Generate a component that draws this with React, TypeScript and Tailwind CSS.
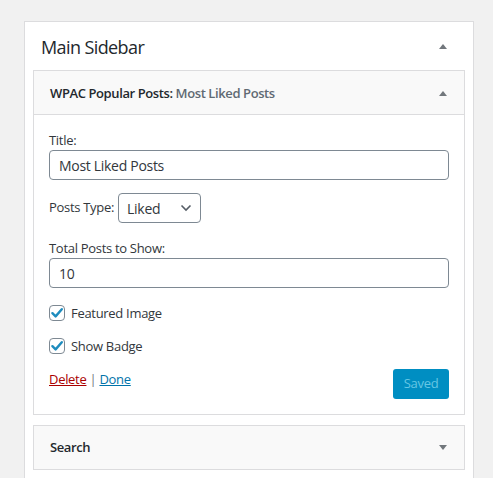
import React from "react";

const font = { fontFamily: '"Open Sans", "Noto Sans", sans-serif' };

function TriUp() {
  return (
    <svg width="10" height="6" viewBox="0 0 10 6" className="block">
      <polygon points="1,6 9,6 5,1" fill="#72777c" />
    </svg>
  );
}
function TriDown() {
  return (
    <svg width="10" height="6" viewBox="0 0 10 6" className="block">
      <polygon points="1,0 9,0 5,5" fill="#72777c" />
    </svg>
  );
}

function Check({ label }: { label: string }) {
  return (
    <div className="flex items-center h-[16px]">
      <span className="w-[16px] h-[16px] border border-[#7e8993] rounded-[4px] bg-white flex items-center justify-center shrink-0">
        <svg width="14" height="14" viewBox="0 0 14 14">
          <path d="M2.4 7.2 L5.6 10.4 L11.8 3.2" stroke="#1e8cbe" strokeWidth="2.4" fill="none" strokeLinecap="round" strokeLinejoin="round" />
        </svg>
      </span>
      <span className="ml-[6px] text-[13px] text-[#32373c] leading-[20px] tracking-[-0.3px]">{label}</span>
    </div>
  );
}

export default function App() {
  return (
    <div className="w-[493px] h-[478px] bg-[#f1f1f1] overflow-hidden pt-[21px] pl-[24px]" style={font}>
      <div className="w-[450px] h-[470px] bg-white border border-[#dcdcde] border-b-0">
        <div className="h-[48px] flex items-center justify-between pl-[16px] pr-[25px]">
          <h2 className="text-[18px] text-[#23282d] leading-[24px] mt-[2px] tracking-[-0.6px]">Main Sidebar</h2>
          <TriUp />
        </div>
        <div className="mx-[8px] border border-[#dcdcde]">
          <div className="h-[44px] bg-[#f9f9f9] border-b border-[#dcdcde] flex items-center justify-between pl-[16px] pr-[16px]">
            <div className="text-[13px] font-semibold text-[#23282d] leading-[20px] tracking-[-0.4px]">
              WPAC Popular Posts: <span className="text-[#606a73]">Most Liked Posts</span>
            </div>
            <TriUp />
          </div>
          <div className="px-[15px] pt-[16px] pb-[15px] text-[13px] text-[#32373c] tracking-[-0.3px]">
            <div className="h-[19px] leading-[19px]">Title:</div>
            <div className="h-[30px] border border-[#7e8993] rounded-[4px] px-[9px] flex items-center text-[14px] text-[#32373c]">
              Most Liked Posts
            </div>
            <div className="mt-[13px] h-[30px] flex items-center">
              <span>Posts Type:</span>
              <div className="ml-[4px] w-[83px] h-[30px] border border-[#7e8993] rounded-[4px] pl-[8px] pr-[8px] flex items-center justify-between text-[14px] text-[#32373c]">
                <span>Liked</span>
                <svg width="12" height="8" viewBox="0 0 12 8">
                  <path d="M1.5 1.5 L6 6 L10.5 1.5" stroke="#555d66" strokeWidth="1.6" fill="none" />
                </svg>
              </div>
            </div>
            <div className="mt-[15px] h-[20px] leading-[20px]">Total Posts to Show:</div>
            <div className="h-[30px] border border-[#7e8993] rounded-[4px] px-[9px] flex items-center text-[14px] text-[#32373c]">
              10
            </div>
            <div className="mt-[17px]">
              <Check label="Featured Image" />
            </div>
            <div className="mt-[17px]">
              <Check label="Show Badge" />
            </div>
            <div className="mt-[15px] flex items-start justify-between">
              <div className="leading-[20px]">
                <span className="text-[#a00] underline">Delete</span>
                <span className="text-[#72777c]"> | </span>
                <span className="text-[#0073aa] underline">Done</span>
              </div>
              <div className="w-[56px] h-[30px] rounded-[3px] bg-[#008ec2] text-[#66c6e4] text-[13px] flex items-center justify-center">
                Saved
              </div>
            </div>
          </div>
        </div>
        <div className="mx-[8px] mt-[10px] h-[45px] bg-[#f9f9f9] border border-[#dcdcde] flex items-center justify-between pl-[16px] pr-[16px]">
          <div className="text-[13px] font-semibold text-[#23282d] tracking-[-0.4px]">Search</div>
          <TriDown />
        </div>
      </div>
    </div>
  );
}
